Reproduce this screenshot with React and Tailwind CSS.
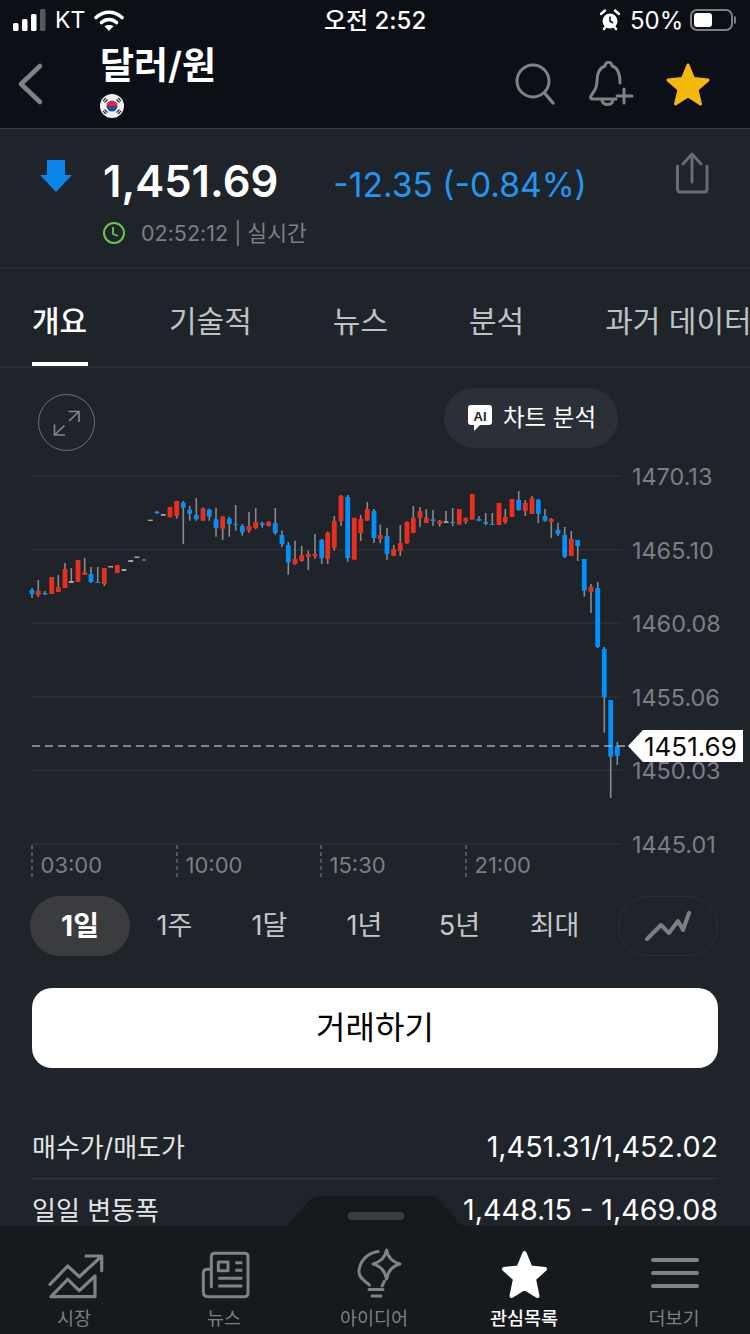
const sans = { fontFamily: '"Inter", "Noto Sans CJK KR", sans-serif' }

const gridLines = [
  [476, '1470.13'],
  [550, '1465.10'],
  [623, '1460.08'],
  [697, '1455.06'],
  [770, '1450.03'],
  [844, '1445.01'],
]

const timeLabels = [
  [32, '03:00'],
  [177, '10:00'],
  [321, '15:30'],
  [466, '21:00'],
]

// x, wick top, wick bottom, body top, body bottom, colour (b blue, r red, g doji)
const candles = [
  [32, 588, 598, 590, 594, 'b'], [38.3, 580, 597, 591, 595, 'r'], [45, 591, 595, 593, 594.5, 'b'],
  [51.7, 577, 594, 577, 594, 'r'], [58.3, 575, 592, 587, 592, 'r'], [65, 563, 588, 569, 588, 'r'],
  [71.3, 568, 583, 581, 583, 'g'], [78, 560, 582, 560, 582, 'r'], [84.7, 558, 575, 572, 575, 'r'],
  [91, 567, 583, 574, 582, 'b'], [97.7, 567, 583, 582, 583, 'b'], [104.3, 568, 586, 568, 584, 'r'],
  [110.7, 566, 567.5, 566, 567.5, 'g'], [117.3, 565, 573, 565, 573, 'r'], [124, 569, 571, 569, 571, 'g'],
  [130.7, 560, 562, 560, 562, 'g'], [137, 556.5, 558, 556.5, 558, 'g'], [144, 559, 561, 559.5, 560.5, 'b'],
  [150.3, 519.7, 521, 519.7, 521, 'g'], [157, 510.7, 514, 511.7, 513, 'b'], [163.3, 514, 515.7, 514, 515.7, 'g'],
  [170, 507, 517.3, 507, 517.3, 'r'], [176.7, 501, 518.7, 501, 516, 'r'], [183.3, 501, 544, 502.7, 507.7, 'b'],
  [189.7, 506, 520.7, 509.7, 513.7, 'b'], [196.3, 498, 520.7, 515, 519.3, 'b'], [203, 507.5, 520.7, 508.7, 520.7, 'r'],
  [209.3, 508.7, 520.7, 509.7, 516.7, 'b'], [216, 507.7, 536.7, 519.3, 528, 'b'], [222.7, 516, 540, 516.7, 528.7, 'r'],
  [229.3, 516.7, 536.7, 518.7, 524, 'b'], [235.7, 505, 530.7, 524, 525, 'b'], [242.3, 524, 535.7, 526, 532.3, 'b'],
  [249, 512, 532.7, 526, 530.7, 'r'], [255.7, 508, 529, 522, 528, 'r'], [262.3, 521.7, 527.7, 523.3, 525, 'b'],
  [268.7, 521, 526.7, 521.7, 526, 'r'], [275.3, 508, 534.7, 523, 533, 'b'], [282, 530.7, 547, 535, 544, 'b'],
  [288.3, 542, 574.7, 545, 562.3, 'b'], [295, 540.7, 564.7, 559, 564, 'r'], [301.7, 546, 561.7, 555, 561, 'r'],
  [308.3, 550.7, 570, 554, 557, 'r'], [315, 534, 558.7, 554, 556.3, 'r'], [321.7, 539, 564, 540, 558, 'b'],
  [327.7, 531.7, 564, 532.7, 558.7, 'r'], [334.3, 516, 550.7, 521, 547.7, 'r'], [341, 495, 526, 496, 521, 'r'],
  [347.7, 495, 561.7, 497, 558, 'b'], [354.3, 517.7, 559.7, 517.7, 559.7, 'r'], [360.7, 515, 541, 519, 533, 'r'],
  [367.3, 502, 520.7, 509, 520.7, 'r'], [374, 509, 543, 511, 538, 'b'], [380.3, 524.7, 543.3, 535, 539, 'r'],
  [387, 527.7, 559.7, 536, 554, 'b'], [393.7, 545, 556, 549, 556, 'r'], [400.3, 525, 556, 543, 551, 'r'],
  [407, 521.5, 543.7, 522, 543.3, 'r'], [413.3, 506, 533, 518, 533, 'r'], [420, 507, 527.3, 511, 518, 'r'],
  [426.3, 509, 523, 517.7, 523, 'r'], [433, 510, 526, 519.3, 521, 'b'], [439.7, 520, 526.7, 521, 524, 'r'],
  [446, 511, 523, 521.3, 523, 'g'], [452.7, 508, 526, 522, 523, 'b'], [459.3, 509, 524.7, 509, 524.7, 'r'],
  [465.7, 517.3, 524, 518.3, 521.7, 'r'], [472.3, 494, 519.7, 494, 519.7, 'r'], [479, 516, 521.3, 519, 520.7, 'b'],
  [485.7, 513, 525.3, 522, 523.7, 'b'], [492.3, 513, 525, 524, 525, 'b'], [499, 503, 525, 503, 525, 'r'],
  [505.3, 509, 524, 517, 522, 'r'], [512, 499, 517, 499, 517, 'r'], [518.7, 491, 510.7, 500, 510, 'b'],
  [525.3, 500, 516, 503, 511, 'r'], [532, 496, 514, 498, 514, 'r'], [538.3, 499, 523, 499.7, 513.7, 'b'],
  [545, 509, 521.7, 516, 520.7, 'b'], [551.3, 518, 538, 519, 522, 'r'], [558, 522.7, 536, 529.7, 534, 'b'],
  [564.7, 527, 558, 535, 556.7, 'b'], [571.3, 531, 556, 539, 556, 'r'], [577.7, 540, 561, 540, 546, 'b'],
  [584.3, 559, 596.7, 559, 590.7, 'b'], [591, 584, 613, 586.7, 591.7, 'r'], [597.7, 582, 648, 588, 647, 'b'],
  [604.3, 647, 732.7, 649, 697.3, 'b'], [610.7, 700, 798, 700, 756.7, 'b'], [617.3, 742, 765, 746, 756, 'b'],
]

const candleFill = { b: '#0091ff', r: '#e9301f', g: '#a8a8a8' }

function Candles() {
  return (
    <svg viewBox="0 460 750 425" className="block h-[425px] w-[750px]">
      {gridLines.map(([y, label]) => (
        <g key={label}>
          <line x1="32" x2="622" y1={y} y2={y} stroke="#2c3037" strokeWidth="1.5" />
          <text x="632" y={y + 9} fontSize="23.4" fill="#7b7e82" style={sans}>{label}</text>
        </g>
      ))}
      {timeLabels.map(([x, label]) => (
        <g key={label}>
          <line x1={x} x2={x} y1="845" y2="878" stroke="#85888c" strokeWidth="1" strokeDasharray="4 3" />
          <text x={x + 8.5} y="873" fontSize="22" fill="#7b7e82" style={sans}>{label}</text>
        </g>
      ))}
      {candles.map(([x, wt, wb, bt, bb, c]) => (
        <g key={x}>
          {wb - wt > bb - bt + 0.5 ? <line x1={x} x2={x} y1={wt} y2={wb} stroke="#8a8a8a" strokeWidth="1.6" /> : null}
          <rect x={x - 2.4} y={bt} width="4.8" height={bb - bt} fill={candleFill[c]} />
        </g>
      ))}
      <line x1="32" x2="628" y1="746" y2="746" stroke="#a3a3a3" strokeWidth="1.5" strokeDasharray="8 5" />
      <polygon points="628,746 643,730 743,730 743,762 643,762" fill="#ffffff" />
      <text x="644" y="755.500" fontSize="26" fill="#0b0b0b" style={sans}>1451.69</text>
    </svg>
  )
}

function StatusBar() {
  return (
    <div className="relative flex h-[40px] items-center pl-[13px] pr-[14px] text-[24px] text-white">
      <svg viewBox="0 0 34 22" className="h-[22px] w-[34px]">
        <rect x="0" y="14" width="5.5" height="8" rx="1.5" fill="#fff" />
        <rect x="9" y="10" width="5.5" height="12" rx="1.5" fill="#fff" />
        <rect x="18" y="5" width="5.5" height="17" rx="1.5" fill="#fff" />
        <rect x="27" y="0" width="5.5" height="22" rx="1.5" fill="#55585c" />
      </svg>
      <span className="ml-[8px] pt-[1px] text-[23px]">KT</span>
      <svg viewBox="0 0 30 22" className="ml-[9px] h-[22px] w-[30px]">
        <path d="M2 8.5 C9.5 1.5 20.5 1.5 28 8.5" fill="none" stroke="#fff" strokeWidth="3.6" strokeLinecap="round" />
        <path d="M7.5 13.5 C12 9.5 18 9.5 22.500 13.5" fill="none" stroke="#fff" strokeWidth="3.6" strokeLinecap="round" />
        <path d="M15 22 L10.500 17.300 C13 15.400 17 15.400 19.500 17.300 Z" fill="#fff" />
      </svg>
      <span className="absolute left-[324px] pt-[1px] font-medium">오전 2:52</span>
      <div className="ml-auto flex items-center">
        <svg viewBox="0 0 20 22" className="h-[22px] w-[20px]">
          <circle cx="10" cy="12" r="7.500" fill="#fff" />
          <path d="M10 7.500 V12 L13 14" fill="none" stroke="#0c0f16" strokeWidth="1.6" />
          <path d="M1 5 L5 1.500 M19 5 L15 1.500 M4 20 L5.500 18 M16 20 L14.500 18" stroke="#fff" strokeWidth="2.4" strokeLinecap="round" />
        </svg>
        <span className="ml-[10px] w-[50px] pt-[1px]">50%</span>
        <div className="ml-[10px] h-[22px] w-[43px] rounded-[7px] border-2 border-[#7d7f83] p-[2px]">
          <div className="h-full w-[18px] rounded-[3px] bg-white" />
        </div>
        <div className="ml-[1px] h-[8px] w-[2px] rounded-r-sm bg-[#7d7f83]" />
      </div>
    </div>
  )
}

function KoreaFlag() {
  return (
    <svg viewBox="0 0 24 24" className="mt-[3px] h-[24px] w-[24px]">
      <circle cx="12" cy="12" r="12" fill="#f4f4f4" />
      <path d="M6.500 12 A5.500 5.500 0 0 1 17.500 12 Z" fill="#e0263c" />
      <path d="M6.500 12 A5.500 5.500 0 0 0 17.500 12 Z" fill="#1f4fa8" />
      <path d="M3 7 L6 4 M4.500 8.500 L7.500 5.500 M18 4 L21 7 M16.500 5.500 L19.500 8.500 M3 17 L6 20 M4.500 15.500 L7.500 18.500 M18 20 L21 17 M16.500 18.500 L19.500 15.500" stroke="#2a2a2a" strokeWidth="1.100" />
    </svg>
  )
}

function Header() {
  return (
    <header className="h-[129px] shrink-0 border-b border-[#383c42] bg-[#0c0f16]" style={sans}>
      <StatusBar />
      <div className="flex items-start">
        <svg viewBox="0 0 30 44" className="ml-[15px] mt-[22px] h-[44px] w-[30px]">
          <path d="M25 4 L6 22 L25 40" fill="none" stroke="#808285" strokeWidth="4.600" strokeLinecap="round" strokeLinejoin="round" />
        </svg>
        <div className="ml-[55px] flex flex-col items-start">
          <h1 className="mt-[1px] text-[37px] font-semibold leading-[50px] text-white">달러/원</h1>
          <KoreaFlag />
        </div>
        <svg viewBox="514 60 44 46" className="ml-auto mt-[20px] h-[46px] w-[44px]">
          <circle cx="535" cy="81" r="16" fill="none" stroke="#808285" strokeWidth="3" />
          <path d="M546.500 93 L555 103" stroke="#808285" strokeWidth="3.400" strokeLinecap="round" />
        </svg>
        <svg viewBox="588 60 46 48" className="ml-[32px] mt-[21px] h-[48px] w-[46px]">
          <path d="M620 82 C620 70 616 66 612 65 C612 60 605 60 605 65 C599 67 597 73 597 80 C597 88 594 90 591 95 C590 97 591 98 593 98 H616" fill="none" stroke="#808285" strokeWidth="3" strokeLinecap="round" strokeLinejoin="round" />
          <path d="M602 99 C603 105 612 105 613 99" fill="none" stroke="#808285" strokeWidth="3" strokeLinecap="round" />
          <path d="M624 88 V102 M617 95 H632" stroke="#808285" strokeWidth="3" strokeLinecap="round" />
        </svg>
        <svg viewBox="0 0 48 48" className="ml-[30px] mr-[38px] mt-[20px] h-[48px] w-[48px]">
          <polygon points="24,5 29.500,18.500 44,20 33,29.500 36.500,44 24,36 11.500,44 15,29.500 4,20 18.500,18.500" fill="#f5b90e" stroke="#f5b90e" strokeWidth="3" strokeLinejoin="round" />
        </svg>
      </div>
    </header>
  )
}

function PriceBlock() {
  return (
    <section className="flex h-[139px] items-start border-b border-[#292e35] pl-[40px] pr-[41px] pt-[31px]" style={sans}>
      <svg viewBox="0 0 32 32" className="h-[32px] w-[32px] shrink-0">
        <path d="M7 0 H25 V15 H32 L16 32 L0 15 H7 Z" fill="#0a84e8" />
      </svg>
      <div className="ml-[31px]">
        <div className="-mt-[8px] flex items-baseline">
          <span className="text-[43.500px] font-semibold leading-[58px] text-white">1,451.69</span>
          <span className="ml-[55px] text-[33.600px] leading-[58px] text-[#2196f3]">-12.35 (-0.84%)</span>
        </div>
        <div className="mt-[4px] flex items-center text-[21.500px] leading-[30px] text-[#7c7f83]">
          <svg viewBox="0 0 24 24" className="-ml-[1px] h-[24px] w-[24px]">
            <circle cx="12" cy="12" r="10" fill="none" stroke="#6cc644" strokeWidth="2" />
            <path d="M11 6 V13 L16 15" fill="none" stroke="#6cc644" strokeWidth="1.800" />
          </svg>
          <span className="ml-[15px]">02:52:12 | 실시간</span>
        </div>
      </div>
      <svg viewBox="676 152 33 42" className="-mt-[8px] ml-auto h-[42px] w-[33px]">
        <path d="M677.500 165 V189 Q677.500 192 680.500 192 H704 Q707 192 707 189 V165" fill="none" stroke="#686b6f" strokeWidth="3" />
        <path d="M692 182 V155 M683 164 L692 154 L701 164" fill="none" stroke="#686b6f" strokeWidth="3" strokeLinecap="round" strokeLinejoin="round" />
      </svg>
    </section>
  )
}

function Tabs() {
  const tabs = ['개요', '기술적', '뉴스', '분석', '과거 데이터']
  return (
    <nav className="flex h-[100px] gap-[81px] overflow-hidden whitespace-nowrap border-b-2 border-[#292e35] pl-[32px] text-[30px]" style={sans}>
      {tabs.map((tab, i) => (
        <div
          key={tab}
          className={i === 0
            ? 'relative flex w-[56px] shrink-0 items-center pt-[8px] font-medium text-white'
            : 'flex shrink-0 items-center pt-[8px] text-[#bfc1c4]'}
        >
          {tab}
          {i === 0 ? <span className="absolute inset-x-0 bottom-0 h-[4px] bg-white" /> : null}
        </div>
      ))}
    </nav>
  )
}

function ChartTools() {
  return (
    <div className="flex h-[92px] items-start justify-between pl-[38px] pr-[132px] pt-[20px]" style={sans}>
      <div className="mt-[6px] flex h-[57px] w-[57px] items-center justify-center rounded-full border border-[#6e7074]">
        <svg viewBox="50 406 33 32" className="h-[32px] w-[33px]">
          <path d="M68.500 410.500 H79 V421 M79 410.500 L69 420 M54.500 423.500 V434 H65 M54.500 434 L64.500 424.500" fill="none" stroke="#85888c" strokeWidth="1.600" />
        </svg>
      </div>
      <button className="flex h-[60px] w-[174px] items-center rounded-full bg-[#2b2f38] pl-[24px] text-[23.500px] text-white">
        <svg viewBox="0 0 24 26" className="h-[26px] w-[24px]">
          <path d="M3 0 H21 Q24 0 24 3 V17 Q24 20 21 20 H12 L6 26 V20 H3 Q0 20 0 17 V3 Q0 0 3 0 Z" fill="#fff" />
          <text x="12" y="15.500" fontSize="13" fontWeight="800" textAnchor="middle" fill="#1f242b" style={{ fontFamily: '"Liberation Sans", sans-serif' }}>AI</text>
        </svg>
        <span className="ml-[11px] whitespace-nowrap">차트 분석</span>
      </button>
    </div>
  )
}

function RangeRow() {
  const ranges = ['1주', '1달', '1년', '5년', '최대']
  return (
    <div className="mt-[11px] flex items-center pl-[30px] pr-[32px] text-[27px]" style={sans}>
      <div className="flex h-[60px] w-[100px] items-center justify-center rounded-[30px] bg-[#3a3c40] text-[28px] font-bold text-white">1일</div>
      <div className="-ml-[3px] flex pt-[1px] text-[#c5c7ca]">
        {ranges.map((r) => (
          <div key={r} className="w-[95px] text-center">{r}</div>
        ))}
      </div>
      <div className="ml-auto flex h-[60px] w-[100px] items-center justify-center rounded-[30px] border border-[#2d3138]">
        <svg viewBox="646 911 46 30" className="h-[30px] w-[46px]">
          <path d="M648 939 L662 925 L670 933 L679 921 L684 930 L690 913" fill="none" stroke="#7d7f83" strokeWidth="4" strokeLinecap="round" strokeLinejoin="round" />
        </svg>
      </div>
    </div>
  )
}

function StatRows() {
  return (
    <div className="mx-[32px] mt-[48px] text-white" style={sans}>
      <div className="flex h-[63px] items-center justify-between border-b border-[#33373e]">
        <span className="text-[26px] text-[#e3e4e6]">매수가/매도가</span>
        <span className="text-[28.700px]">1,451.31/1,452.02</span>
      </div>
      <div className="flex h-[62px] items-center justify-between">
        <span className="text-[26px] text-[#e3e4e6]">일일 변동폭</span>
        <span className="text-[28.700px]">1,448.15 - 1,469.08</span>
      </div>
    </div>
  )
}

const navIcon = 'h-[52px] w-[60px]'
const navStroke = { fill: 'none', stroke: '#808285', strokeLinecap: 'round', strokeLinejoin: 'round' }

function MarketIcon() {
  return (
    <svg viewBox="0 0 60 52" className={navIcon} {...navStroke} strokeWidth="3.200">
      <path d="M5 36.300 L22.700 18 L34.300 28.700 L56 8.700 M41 8 H56.700 V22.700" />
      <path d="M6 48.700 L22.700 31.300 L34.300 42.700 L50 28 V48.700 Z" />
    </svg>
  )
}

function NewsIcon() {
  return (
    <svg viewBox="585 24 180 156" className={navIcon} {...navStroke} strokeWidth="9">
      <path d="M634 140 V50 Q634 40 644 40 H734 Q744 40 744 50 V160 Q744 170 734 170 H625 Q610 170 610 155 V100 Q610 88 622 88 H634" />
      <path d="M655 66 H684 V92 H655 Z M706 68 H727 M706 91 H727 M655 115 H727 M655 138 H727" strokeLinecap="butt" />
    </svg>
  )
}

function IdeaIcon() {
  return (
    <svg viewBox="0 0 60 52" className={navIcon} {...navStroke} strokeWidth="3">
      <path d="M41.600 2 C43 10 47 14 55 16 C47 18 43 23 41.600 31 C40 23 36 18 28 16 C36 14 40 10 41.600 2 Z" />
      <path d="M33 3.500 C22 5 14 14 14 24 C14 30 20 33 24.500 37" />
      <path d="M39.500 33 L37 38 M24 41.500 H38 M27 48 H36" />
    </svg>
  )
}

function StarIcon() {
  return (
    <svg viewBox="0 0 60 52" className={navIcon}>
      <polygon points="29.500,5 35.500,19.500 50,21 39,31 42.500,48 29.500,40 16.500,48 20,31 9,21 23.500,19.500" fill="#fff" stroke="#fff" strokeWidth="4" strokeLinejoin="round" />
    </svg>
  )
}

function MenuIcon() {
  return (
    <svg viewBox="0 0 60 52" className={navIcon} {...navStroke} strokeWidth="4">
      <path d="M8 12 H52 M8 25 H52 M8 38 H52" />
    </svg>
  )
}

const navItems = [
  { label: '시장', Icon: MarketIcon },
  { label: '뉴스', Icon: NewsIcon },
  { label: '아이디어', Icon: IdeaIcon },
  { label: '관심목록', Icon: StarIcon, active: true },
  { label: '더보기', Icon: MenuIcon },
]

function BottomNav() {
  return (
    <footer className="relative z-10 h-[108px] shrink-0 bg-[#16191e]" style={sans}>
      <svg viewBox="0 0 180 31" className="absolute -top-[30px] left-[285px] h-[31px] w-[180px]">
        <path d="M0 31 L24 5 Q29 0 36 0 H146 Q151 0 154 5 L179 31 Z" fill="#16191e" />
        <rect x="63" y="16" width="56" height="8" rx="4" fill="#3b3e43" />
      </svg>
      <div className="grid grid-cols-5 pt-[22px]">
        {navItems.map(({ label, Icon, active }) => (
          <div key={label} className="flex flex-col items-center">
            <Icon />
            <span className={active ? '-ml-[2px] mt-[8px] text-[18.500px] font-medium leading-[20px] text-white' : '-ml-[2px] mt-[8px] text-[18.500px] leading-[20px] text-[#7d7f83]'}>{label}</span>
          </div>
        ))}
      </div>
    </footer>
  )
}

export default function App() {
  return (
    <div className="flex h-[1334px] w-[750px] flex-col overflow-hidden bg-[#1f242b]">
      <Header />
      <main className="min-h-0 flex-1 overflow-hidden">
        <PriceBlock />
        <Tabs />
        <ChartTools />
        <Candles />
        <RangeRow />
        <button className="mx-[32px] mt-[32px] block h-[80px] w-[686px] rounded-[20px] bg-white text-[32px] text-black" style={sans}>거래하기</button>
        <StatRows />
      </main>
      <BottomNav />
    </div>
  )
}
